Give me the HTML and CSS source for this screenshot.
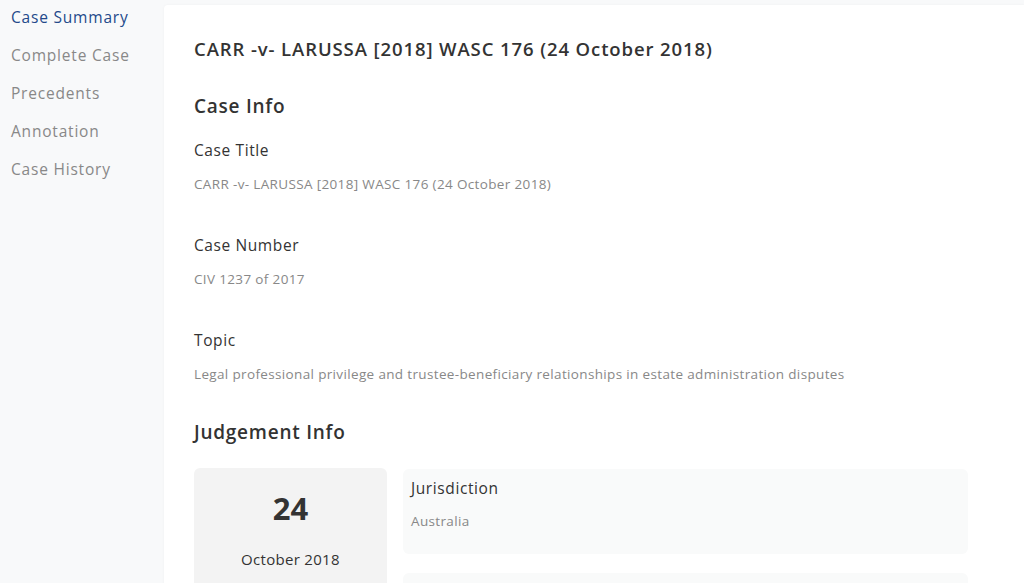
FILE: index.html
```html
<!DOCTYPE html>
<html lang="en">
<head>
<meta charset="utf-8">
<title>CARR -v- LARUSSA [2018] WASC 176</title>
<link rel="stylesheet" href="styles.css">
</head>
<body>
<div class="page">
  <nav class="sidebar">
    <a class="nav-item active">Case Summary</a>
    <a class="nav-item">Complete Case</a>
    <a class="nav-item">Precedents</a>
    <a class="nav-item">Annotation</a>
    <a class="nav-item">Case History</a>
  </nav>
  <main class="panel">
    <h1 class="case-title">CARR -v- LARUSSA [2018] WASC 176 (24 October 2018)</h1>
    <h2 class="section-title">Case Info</h2>
    <div class="field">
      <div class="field-label">Case Title</div>
      <div class="field-value">CARR -v- LARUSSA [2018] WASC 176 (24 October 2018)</div>
    </div>
    <div class="field">
      <div class="field-label">Case Number</div>
      <div class="field-value">CIV 1237 of 2017</div>
    </div>
    <div class="field">
      <div class="field-label">Topic</div>
      <div class="field-value">Legal professional privilege and trustee-beneficiary relationships in estate administration disputes</div>
    </div>
    <h2 class="section-title judgement">Judgement Info</h2>
    <div class="judgement-grid">
      <div class="date-card">
        <div class="date-day">24</div>
        <div class="date-month">October 2018</div>
      </div>
      <div class="info-cards">
        <div class="info-card">
          <div class="field-label">Jurisdiction</div>
          <div class="field-value">Australia</div>
        </div>
        <div class="info-card"></div>
      </div>
    </div>
  </main>
</div>
</body>
</html>
```

FILE: styles.css
```css
* { box-sizing: border-box; }
html, body {
  margin: 0;
  padding: 0;
  height: 100%;
  overflow: hidden;
}
body {
  background: #f8f9fa;
  font-family: "Open Sans", "Noto Sans", sans-serif;
  color: #333;
}
.page {
  display: flex;
  align-items: flex-start;
  height: 100%;
}
.sidebar {
  width: 164px;
  flex: 0 0 164px;
  display: flex;
  flex-direction: column;
  gap: 15px;
  padding: 6px 0 0 11px;
}
.nav-item {
  font-size: 15.5px;
  line-height: 23px;
  letter-spacing: 0.8px;
  color: #888;
  font-weight: 500;
  cursor: pointer;
}
.nav-item.active {
  color: #23498a;
}
.panel {
  flex: 1;
  margin-top: 5px;
  background: #fff;
  min-height: 700px;
  padding: 32px 30px 0 30px;
  box-shadow: 0 0 3px rgba(0,0,0,0.04);
  border-top-left-radius: 4px;
}
.case-title {
  margin: 0;
  font-size: 18.5px;
  line-height: 24px;
  letter-spacing: 0.9px;
  font-weight: 600;
  color: #333;
}
.section-title {
  margin: 33px 0 0 0;
  font-size: 19px;
  line-height: 24px;
  letter-spacing: 0.75px;
  font-weight: 600;
  color: #333;
}
.field {
  height: 95px;
}
.section-title + .field { margin-top: 22px; }
.field-label {
  font-size: 15.5px;
  line-height: 20px;
  letter-spacing: 0.6px;
  font-weight: 500;
  color: #333;
}
.field-value {
  margin-top: 14px;
  font-size: 13.5px;
  line-height: 20px;
  letter-spacing: 0.35px;
  color: #888;
}
.section-title.judgement {
  margin-top: -5px;
}
.judgement-grid {
  display: flex;
  gap: 16px;
  margin-top: 24px;
  width: 774px;
}
.date-card {
  width: 193px;
  flex: 0 0 193px;
  height: 160px;
  background: #f3f3f3;
  border-radius: 6px;
  display: flex;
  flex-direction: column;
  align-items: center;
  padding-top: 22px;
}
.date-day {
  font-size: 31px;
  line-height: 36px;
  font-weight: 700;
  color: #333;
}
.date-month {
  margin-top: 23px;
  font-size: 15px;
  line-height: 20px;
  letter-spacing: 0.3px;
  font-weight: 500;
  color: #333;
}
.info-cards {
  flex: 1;
  display: flex;
  flex-direction: column;
  gap: 19px;
  padding-top: 1px;
}
.info-card {
  background: #f9fafa;
  border-radius: 6px;
  height: 85px;
  flex: 0 0 85px;
  padding: 9px 8px;
}
.info-card .field-value { margin-top: 13px; }
```
